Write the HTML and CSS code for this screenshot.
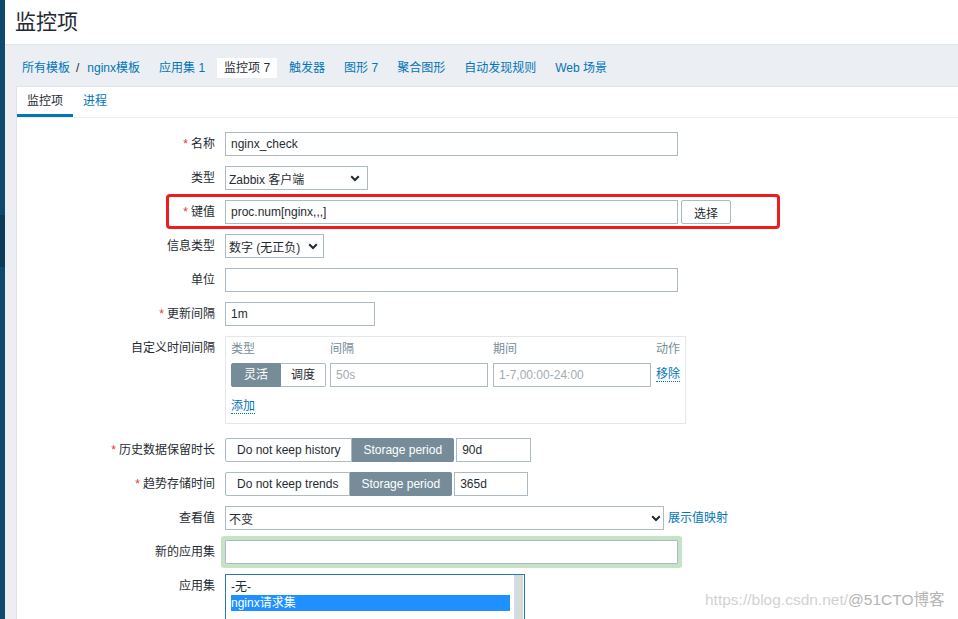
FILE: index.html
```html
<!DOCTYPE html>
<html lang="zh-CN">
<head>
<meta charset="utf-8">
<title>监控项</title>
<link rel="stylesheet" href="styles.css">
</head>
<body>
<div class="app">
  <aside class="sidebar"><div class="sb-active"></div></aside>
  <main class="main">
    <header class="page-header"><h1>监控项</h1></header>
    <div class="content">
      <nav class="crumbs">
        <span class="crumb"><a class="link">所有模板</a><span class="sep">/</span><a class="link">nginx模板</a></span>
        <a class="crumb">应用集 1</a>
        <span class="crumb active">监控项 7</span>
        <a class="crumb">触发器</a>
        <a class="crumb">图形 7</a>
        <a class="crumb">聚合图形</a>
        <a class="crumb">自动发现规则</a>
        <a class="crumb">Web 场景</a>
      </nav>
      <section class="panel">
        <div class="tabs">
          <span class="tab active">监控项</span>
          <a class="tab">进程</a>
        </div>
        <form class="form">
          <div class="row">
            <label class="label"><span class="req">*</span>名称</label>
            <div class="field"><input class="input w-xl" value="nginx_check"></div>
          </div>
          <div class="row">
            <label class="label">类型</label>
            <div class="field">
              <div class="select w-type"><span>Zabbix 客户端</span><svg class="chev" width="10" height="7" viewBox="0 0 10 7"><path d="M1.2 1.2L5 5 8.8 1.2" fill="none" stroke="#1f2c33" stroke-width="2"/></svg></div>
            </div>
          </div>
          <div class="row row-key">
            <div class="highlight"></div>
            <label class="label"><span class="req">*</span>键值</label>
            <div class="field"><input class="input w-xl" value="proc.num[nginx,,,]"><button type="button" class="btn">选择</button></div>
          </div>
          <div class="row">
            <label class="label">信息类型</label>
            <div class="field">
              <div class="select w-info"><span>数字 (无正负)</span><svg class="chev" width="10" height="7" viewBox="0 0 10 7"><path d="M1.2 1.2L5 5 8.8 1.2" fill="none" stroke="#1f2c33" stroke-width="2"/></svg></div>
            </div>
          </div>
          <div class="row">
            <label class="label">单位</label>
            <div class="field"><input class="input w-xl" value=""></div>
          </div>
          <div class="row">
            <label class="label"><span class="req">*</span>更新间隔</label>
            <div class="field"><input class="input w-sm" value="1m"></div>
          </div>
          <div class="row">
            <label class="label">自定义时间间隔</label>
            <div class="field">
              <div class="intervals">
                <div class="iv-grid">
                  <span class="iv-head">类型</span>
                  <span class="iv-head">间隔</span>
                  <span class="iv-head">期间</span>
                  <span class="iv-head">动作</span>
                  <div class="seg">
                    <span class="seg-item on">灵活</span><span class="seg-item">调度</span>
                  </div>
                  <input class="input iv-input" placeholder="50s">
                  <input class="input iv-input" placeholder="1-7,00:00-24:00">
                  <span class="iv-action"><a class="action-link">移除</a></span>
                </div>
                <div class="iv-add"><a class="action-link">添加</a></div>
              </div>
            </div>
          </div>
          <div class="row">
            <label class="label"><span class="req">*</span>历史数据保留时长</label>
            <div class="field field-tight">
              <div class="seg">
                <span class="seg-item">Do not keep history</span><span class="seg-item on">Storage period</span>
              </div>
              <input class="input w-days" value="90d">
            </div>
          </div>
          <div class="row">
            <label class="label"><span class="req">*</span>趋势存储时间</label>
            <div class="field field-tight">
              <div class="seg">
                <span class="seg-item">Do not keep trends</span><span class="seg-item on">Storage period</span>
              </div>
              <input class="input w-days2" value="365d">
            </div>
          </div>
          <div class="row">
            <label class="label">查看值</label>
            <div class="field field-wide">
              <div class="select w-lookup"><span>不变</span><svg class="chev" width="10" height="7" viewBox="0 0 10 7"><path d="M1.2 1.2L5 5 8.8 1.2" fill="none" stroke="#1f2c33" stroke-width="2"/></svg></div>
              <a class="link inline-link">展示值映射</a>
            </div>
          </div>
          <div class="row">
            <label class="label">新的应用集</label>
            <div class="field"><input class="input w-xl glow" value=""></div>
          </div>
          <div class="row">
            <label class="label">应用集</label>
            <div class="field">
              <div class="listbox">
                <div class="list-options">
                  <div class="opt">-无-</div>
                  <div class="opt selected">nginx请求集</div>
                </div>
                <div class="scrollbar"></div>
              </div>
            </div>
          </div>
        </form>
      </section>
    </div>
  </main>
</div>
<div class="watermark"><span class="wm-url">https://blog.csdn.net/</span><span class="wm-site">@51CTO博客</span></div>
</body>
</html>
```
FILE: styles.css
```css
* { box-sizing: border-box; }
html, body { margin: 0; }
body {
  width: 958px;
  height: 619px;
  overflow: hidden;
  position: relative;
  font-family: "Liberation Sans", Arial, "Noto Sans CJK SC", sans-serif;
  font-size: 12px;
  color: #1f2c33;
  background: #ebeef2;
}
a { cursor: pointer; }
.link { color: #0275b8; text-decoration: none; }

.app { display: flex; height: 619px; overflow: hidden; }
.sidebar { width: 5px; flex: none; background: #0e4a6e; }
.sb-active { margin-top: 215px; height: 52px; background: #0a3b59; }

.main { flex: 1; min-width: 0; display: flex; flex-direction: column; overflow: hidden; }
.page-header {
  height: 45px;
  flex: none;
  background: #fff;
  border-bottom: 1px solid #dfe4e7;
  padding-left: 10px;
}
.page-header h1 {
  margin: 0;
  font-size: 21px;
  font-weight: normal;
  line-height: 43px;
  color: #1f2c33;
}

.content { flex: 1; min-height: 0; display: flex; flex-direction: column; padding-left: 11px; }
.crumbs { display: flex; align-items: center; gap: 5px; padding: 13px 0 8px; flex: none; }
.crumb {
  height: 20px;
  line-height: 20px;
  padding: 0 7px;
  color: #0275b8;
  white-space: nowrap;
}
.crumb:first-child { padding-left: 6px; }
.crumb.active { background: #fff; color: #1f2c33; }
.sep { margin: 0 8px 0 6px; color: #1f2c33; }

.panel {
  flex: 1;
  min-height: 0;
  overflow: hidden;
  background: #fff;
  border-top: 1px solid #dfe4e7;
  border-left: 1px solid #dfe4e7;
}
.tabs { display: flex; border-bottom: 1px solid #ebeef2; }
.tab {
  height: 30px;
  line-height: 28px;
  padding: 0 10px;
  border-bottom: 3px solid transparent;
  color: #0275b8;
}
.tab.active { border-bottom-color: #0275b8; color: #1f2c33; }

.form { display: flex; flex-direction: column; gap: 10px; padding-top: 14px; }
.row { display: grid; grid-template-columns: 198px 1fr; column-gap: 10px; }
.row-key { position: relative; }
.label { text-align: right; line-height: 24px; white-space: nowrap; color: #1f2c33; }
.req { color: #e33734; margin-right: 3px; }
.field { display: flex; align-items: flex-start; gap: 3px; }
.field-tight { gap: 2px; }
.field-wide { gap: 4px; }

.input {
  height: 24px;
  border: 1px solid #acbbc2;
  border-radius: 0;
  padding: 0 5px;
  font: inherit;
  color: #1f2c33;
  background: #fff;
  outline: none;
  margin: 0;
}
.input::placeholder { color: #a2acb1; }
.w-xl { width: 453px; }
.w-sm { width: 150px; }
.w-days { width: 75px; }
.w-days2 { width: 74px; }
.glow { box-shadow: 0 0 0 4px #c6e3c8; border-radius: 1px; }

.select {
  height: 24px;
  border: 1px solid #acbbc2;
  background: #fff;
  display: flex;
  align-items: center;
  justify-content: space-between;
  padding: 0 8px 0 3px;
  white-space: nowrap;
}
.w-type { width: 143px; padding-right: 7px; }
.w-info { width: 99px; padding-right: 5px; }
.w-lookup { width: 439px; padding-right: 2px; }
.chev { display: block; flex: none; }

.btn {
  height: 24px;
  padding: 0 12px;
  border: 1px solid #acbbc2;
  border-radius: 2px;
  background: #fff;
  font: inherit;
  color: #1f2c33;
  margin: 0;
}

.highlight {
  position: absolute;
  left: 149px;
  top: -6px;
  width: 614px;
  height: 35px;
  border: 3px solid #ee1c1c;
  border-radius: 4px;
  pointer-events: none;
}

.seg { display: flex; }
.seg-item {
  height: 24px;
  line-height: 22px;
  padding: 0 11px;
  border: 1px solid #acbbc2;
  background: #fff;
  color: #1f2c33;
  white-space: nowrap;
}
.seg-item + .seg-item { border-left: none; }
.seg-item:first-child { border-radius: 2px 0 0 2px; }
.seg-item:last-child { border-radius: 0 2px 2px 0; }
.seg-item.on { background: #768d99; border-color: #768d99; color: #fff; }

.intervals {
  width: 461px;
  border: 1px solid #e3e7ea;
  padding: 4px 5px 9px;
  margin-bottom: 4px;
}
.iv-grid {
  display: grid;
  grid-template-columns: 94px 158px 158px auto;
  column-gap: 5px;
  row-gap: 6px;
}
.iv-head { line-height: 16px; color: #768d99; }
.iv-grid .seg-item { padding: 0 10px; }
.iv-grid .seg-item.on { padding: 0 12px; }
.iv-input { width: 158px; }
.iv-action { padding-top: 4px; }
.action-link {
  display: inline-block;
  line-height: 14px;
  color: #0275b8;
  border-bottom: 1px dotted #0275b8;
}
.iv-add { margin-top: 11px; line-height: 16px; }
.inline-link { line-height: 24px; }

.listbox {
  width: 300px;
  height: 46px;
  border: 1px solid #2a78b3;
  border-bottom: none;
  background: #fff;
  display: flex;
}
.list-options { flex: 1; padding: 4px 4px 0 5px; }
.opt { line-height: 16px; height: 16px; white-space: nowrap; }
.opt.selected { background: #1e90ff; color: #fff; }
.scrollbar { width: 9px; background: #d5dadd; margin-right: 1px; }

.watermark {
  position: absolute;
  left: 705px;
  top: 591px;
  font-size: 15.5px;
  line-height: 18px;
  white-space: nowrap;
  font-family: "Liberation Sans", Arial, "Noto Sans CJK SC", sans-serif;
}
.wm-url { color: #d2d2d2; }
.wm-site { color: #b4b4b4; }
```
